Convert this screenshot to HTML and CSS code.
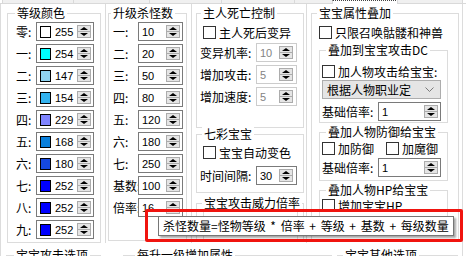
FILE: index.html
```html
<!DOCTYPE html>
<html lang="zh-CN">
<head>
    <meta charset="UTF-8">
    <title>宝宝设置</title>
    <link rel="stylesheet" href="styles.css">
</head>
<body>
    <div class="tabs">
        <span class="tab t1"></span>
        <span class="tab t2"></span>
        <span class="tab t3"></span>
        <span class="tab t4"></span>
        <span class="tab t5"></span>
        <span class="tab active t6"></span>
        <span class="tab t7"></span>
    </div>

    <div class="page">
        <div class="top">
            <!-- 等级颜色 -->
            <div class="pane p1">
                <div class="group g-colors">
                    <span class="title">等级颜色</span>
                    <div class="rows">
                        <div class="row"><span class="label">零:</span><div class="spin"><span class="swatch c0"></span><span class="val">255</span><span class="arrows"><i class="up"></i><i class="down"></i></span></div></div>
                        <div class="row"><span class="label">一:</span><div class="spin"><span class="swatch c1"></span><span class="val">254</span><span class="arrows"><i class="up"></i><i class="down"></i></span></div></div>
                        <div class="row"><span class="label">二:</span><div class="spin"><span class="swatch c2"></span><span class="val">147</span><span class="arrows"><i class="up"></i><i class="down"></i></span></div></div>
                        <div class="row"><span class="label">三:</span><div class="spin"><span class="swatch c3"></span><span class="val">154</span><span class="arrows"><i class="up"></i><i class="down"></i></span></div></div>
                        <div class="row"><span class="label">四:</span><div class="spin"><span class="swatch c4"></span><span class="val">229</span><span class="arrows"><i class="up"></i><i class="down"></i></span></div></div>
                        <div class="row"><span class="label">五:</span><div class="spin"><span class="swatch c5"></span><span class="val">168</span><span class="arrows"><i class="up"></i><i class="down"></i></span></div></div>
                        <div class="row"><span class="label">六:</span><div class="spin"><span class="swatch c6"></span><span class="val">180</span><span class="arrows"><i class="up"></i><i class="down"></i></span></div></div>
                        <div class="row"><span class="label">七:</span><div class="spin"><span class="swatch c7"></span><span class="val">252</span><span class="arrows"><i class="up"></i><i class="down"></i></span></div></div>
                        <div class="row"><span class="label">八:</span><div class="spin"><span class="swatch c7"></span><span class="val">252</span><span class="arrows"><i class="up"></i><i class="down"></i></span></div></div>
                        <div class="row"><span class="label">九:</span><div class="spin"><span class="swatch c7"></span><span class="val">252</span><span class="arrows"><i class="up"></i><i class="down"></i></span></div></div>
                    </div>
                </div>
            </div>

            <!-- 升级杀怪数 -->
            <div class="pane p2">
                <div class="group g-kills">
                    <span class="title">升级杀怪数</span>
                    <div class="rows">
                        <div class="row"><span class="label">一:</span><div class="spin"><span class="val">10</span><span class="arrows"><i class="up"></i><i class="down"></i></span></div></div>
                        <div class="row"><span class="label">二:</span><div class="spin"><span class="val">20</span><span class="arrows"><i class="up"></i><i class="down"></i></span></div></div>
                        <div class="row"><span class="label">三:</span><div class="spin"><span class="val">50</span><span class="arrows"><i class="up"></i><i class="down"></i></span></div></div>
                        <div class="row"><span class="label">四:</span><div class="spin"><span class="val">80</span><span class="arrows"><i class="up"></i><i class="down"></i></span></div></div>
                        <div class="row"><span class="label">五:</span><div class="spin"><span class="val">120</span><span class="arrows"><i class="up"></i><i class="down"></i></span></div></div>
                        <div class="row"><span class="label">六:</span><div class="spin"><span class="val">180</span><span class="arrows"><i class="up"></i><i class="down"></i></span></div></div>
                        <div class="row"><span class="label">七:</span><div class="spin"><span class="val">250</span><span class="arrows"><i class="up"></i><i class="down"></i></span></div></div>
                        <div class="row"><span class="label">基数:</span><div class="spin"><span class="val">100</span><span class="arrows"><i class="up"></i><i class="down"></i></span></div></div>
                        <div class="row"><span class="label">倍率:</span><div class="spin"><span class="val">16</span><span class="arrows"><i class="up"></i><i class="down"></i></span></div></div>
                    </div>
                </div>
            </div>

            <div class="pane p3">
                <div class="group g-death">
                    <span class="title">主人死亡控制</span>
                    <label class="check-row"><span class="check"></span>主人死后变异</label>
                    <div class="row"><span class="label">变异机率:</span><div class="spin off"><span class="val">10</span><span class="arrows"><i class="up"></i><i class="down"></i></span></div></div>
                    <div class="row"><span class="label">增加攻击:</span><div class="spin off"><span class="val">5</span><span class="arrows"><i class="up"></i><i class="down"></i></span></div></div>
                    <div class="row"><span class="label">增加速度:</span><div class="spin off"><span class="val">5</span><span class="arrows"><i class="up"></i><i class="down"></i></span></div></div>
                </div>
                <div class="group g-rainbow">
                    <span class="title">七彩宝宝</span>
                    <label class="check-row"><span class="check"></span>宝宝自动变色</label>
                    <div class="row"><span class="label">时间间隔:</span><div class="spin"><span class="val">30</span><span class="arrows"><i class="up"></i><i class="down"></i></span></div></div>
                </div>
                <div class="group g-power">
                    <span class="title">宝宝攻击威力倍率</span>
                    <div class="inner-box"></div>
                </div>
            </div>

            <!-- 宝宝属性叠加 -->
            <div class="pane p4">
                <div class="group g-stack">
                    <span class="title">宝宝属性叠加</span>
                    <label class="check-row"><span class="check"></span>只限召唤骷髅和神兽</label>
                    <div class="group sub sub-dc">
                        <span class="title">叠加到宝宝攻击DC</span>
                        <label class="check-row"><span class="check"></span>加人物攻击给宝宝:</label>
                        <div class="select">根据人物职业定<svg width="9" height="5" viewBox="0 0 9 5"><path d="M0.5 0.5 L4.5 4.5 L8.5 0.5" fill="none" stroke="#7a7a7a"/></svg></div>
                        <div class="row"><span class="label">基础倍率:</span><div class="spin"><span class="val">1</span><span class="arrows"><i class="up"></i><i class="down"></i></span></div></div>
                    </div>
                    <div class="group sub sub-def">
                        <span class="title">叠加人物防御给宝宝</span>
                        <div class="checks">
                            <label class="check-row"><span class="check"></span>加防御</label>
                            <label class="check-row"><span class="check"></span>加魔御</label>
                        </div>
                        <div class="row"><span class="label">基础倍率:</span><div class="spin"><span class="val">1</span><span class="arrows"><i class="up"></i><i class="down"></i></span></div></div>
                    </div>
                    <div class="group sub sub-hp">
                        <span class="title">叠加人物HP给宝宝</span>
                        <label class="check-row"><span class="check"></span>增加宝宝HP</label>
                    </div>
                </div>
            </div>
        </div>

        <div class="bottom">
            <div class="group b-attack"><span class="title">宝宝攻击选项</span></div>
            <div class="group b-level"><span class="title">每升一级增加属性</span></div>
            <div class="group b-other"><span class="title">宝宝其他选项</span></div>
        </div>
    </div>

    <!-- hover hint over 倍率 -->
    <div class="tip">杀怪数量=怪物等级 * 倍率 + 等级 + 基数 + 每级数量</div>
    <div class="mark"></div>
</body>
</html>
```

FILE: styles.css
```css
body {
    margin: 0;
    width: 466px;
    height: 256px;
    overflow: hidden;
    position: relative;
    background: #fff;
    font-family: "Noto Sans CJK SC", sans-serif;
    font-size: 12px;
    color: #000;
}

/* tab strip, only its bottom edge shows */
.tabs {
    display: flex;
    height: 4px;
    padding-left: 2px;
    border-bottom: 1px solid #d9d9d9;
    box-sizing: border-box;
}

.tab {
    height: 3px;
    background: #f0f0f0;
    border: 1px solid #d9d9d9;
    border-top: none;
    margin-right: -1px;
}

.tab.active {
    background: #fff;
    height: 4px;
    border-bottom: none;
    border-top: 1px dotted #444;
    box-sizing: border-box;
}

.t1 { width: 70px; }
.t2 { width: 75px; }
.t3 { width: 71px; }
.t4 { width: 72px; }
.t5 { width: 37px; }
.t6 { width: 66px; }
.t7 { width: 64px; }

.page {
    width: 463px;
    height: 252px;
    box-sizing: border-box;
    border-left: 1px solid #dcdcdc;
    border-right: 1px solid #dcdcdc;
}

.top {
    display: flex;
    height: 239px;
}

/* each column sits in its own panel, left edge visible */
.pane {
    box-sizing: border-box;
    padding-top: 9px;
}

.p1 { width: 104px; padding-left: 6px; }
.p2 { width: 86px; padding-left: 2px; border-left: 1px solid #dcdcdc; }
.p3 { width: 115px; padding-left: 4px; border-left: 1px solid #dcdcdc; }
.p4 { width: 156px; padding-left: 4px; border-left: 1px solid #dcdcdc; }

.group {
    border: 1px solid #dcdcdc;
    box-sizing: border-box;
}

.group > .title {
    display: table;
    height: 14px;
    line-height: 14px;
    margin: -8px 0 0 7px;
    padding: 0 2px;
    background: #fff;
    white-space: nowrap;
}

.rows {
    padding-top: 2px;
}

.row {
    display: flex;
    align-items: center;
    height: 19px;
    margin-bottom: 3px;
}

.label {
    white-space: nowrap;
}

/* spin edit */
.spin {
    display: flex;
    align-items: center;
    height: 19px;
    box-sizing: border-box;
    border: 1px solid #7a7a7a;
    background: #fff;
    padding: 0 2px 0 3px;
}

.spin .val {
    flex: 1;
    font-family: "Liberation Sans", sans-serif;
    font-size: 11px;
    line-height: 12px;
}

.spin.off {
    border-color: #cccccc;
}

.spin.off .val {
    color: #838383;
}

.arrows {
    display: flex;
    flex-direction: column;
    width: 14px;
    height: 13px;
}

.arrows i {
    flex: 1;
    display: flex;
    align-items: center;
    justify-content: center;
    background: #e5e5e5;
    border: 1px solid #acacac;
}

.arrows i + i {
    border-top: none;
}

.arrows .up::before {
    content: "";
    border-left: 4px solid transparent;
    border-right: 4px solid transparent;
    border-bottom: 3px solid #000;
}

.arrows .down::before {
    content: "";
    border-left: 4px solid transparent;
    border-right: 4px solid transparent;
    border-top: 3px solid #000;
}

.swatch {
    width: 11px;
    height: 12px;
    box-sizing: border-box;
    border: 1px solid #000;
    margin-right: 4px;
}

.c0 { background: #ffffff; }
.c1 { background: #00ffff; }
.c2 { background: #8fd3f0; }
.c3 { background: #33b2ee; }
.c4 { background: #7f84ff; }
.c5 { background: #0a80dc; }
.c6 { background: #1549e0; }
.c7 { background: #0000ff; }

/* check boxes */
.check-row {
    display: flex;
    align-items: center;
    height: 13px;
    line-height: 13px;
    white-space: nowrap;
}

.check {
    width: 13px;
    height: 13px;
    box-sizing: border-box;
    border: 1px solid #333;
    background: #fff;
    margin-right: 3px;
}

/* 等级颜色 */
.g-colors {
    width: 94px;
    height: 230px;
}

.g-colors .rows {
    padding-left: 8px;
}

.g-colors .label {
    width: 20px;
}

.g-colors .spin {
    width: 58px;
}

/* 升级杀怪数 */
.g-kills {
    width: 79px;
    height: 228px;
}

.g-kills > .title {
    margin-left: 2px;
}

.g-kills .rows {
    padding-left: 4px;
}

.g-kills .label {
    width: 25px;
}

.g-kills .spin {
    width: 45px;
}

/* middle column */
.p3 .group {
    width: 108px;
}

.p3 .label {
    width: 56px;
    padding-left: 3px;
}

.p3 .spin {
    width: 41px;
    padding-right: 3px;
}

.g-death {
    height: 115px;
}

.g-death > .title {
    margin-left: 4px;
}

.g-death .check-row {
    margin: 6px 0 4px 6px;
}

.g-rainbow {
    height: 59px;
    margin-top: 6px;
}

.g-rainbow > .title {
    margin-left: 5px;
}

.g-rainbow .check-row {
    margin: 5px 0 7px 6px;
}

.g-power {
    height: 38px;
    margin-top: 10px;
}

.g-power > .title {
    margin-left: 5px;
}

.inner-box {
    height: 30px;
    margin: 0 5px 0 6px;
    border: 1px solid #dcdcdc;
    border-bottom: none;
}

/* 宝宝属性叠加 */
.g-stack {
    width: 148px;
    height: 228px;
    padding: 0 10px 0 7px;
}

.g-stack > .title {
    margin-left: -2px;
}

.g-stack > .check-row {
    margin: 6px 0 11px 0;
}

.sub {
    padding: 0 6px 0 2px;
}

.sub > .title {
    margin-left: 4px;
}

.sub-dc {
    height: 73px;
}

.sub-dc .check-row {
    margin: 8px 0 2px;
}

.select {
    display: flex;
    align-items: center;
    justify-content: space-between;
    height: 19px;
    box-sizing: border-box;
    background: #e5e5e5;
    border: 1px solid #adadad;
    padding: 0 6px 0 4px;
    margin-bottom: 3px;
}

.sub .label {
    width: 56px;
}

.sub .spin {
    flex: 1;
}

.sub-def {
    height: 49px;
    margin-top: 9px;
}

.checks {
    display: flex;
    gap: 12px;
    margin: 3px 0 3px;
}

.sub-hp {
    height: 44px;
    margin-top: 9px;
}

.sub-hp .check-row {
    margin-top: 2px;
}

/* bottom row of group boxes */
.bottom {
    display: flex;
    padding: 12px 0 0 5px;
}

.bottom .group {
    height: 20px;
    border-bottom: none;
}

.b-attack {
    width: 95px;
}

.b-attack > .title {
    margin-left: 7px;
}

.b-level {
    width: 209px;
    margin-left: 22px;
}

.b-level > .title {
    margin-left: 11px;
}

.b-other {
    width: 121px;
    margin-left: 5px;
}

.b-other > .title {
    margin-left: 5px;
}

/* tooltip and the red highlight drawn over it */
.tip {
    position: absolute;
    left: 158px;
    top: 216px;
    width: 296px;
    height: 20px;
    box-sizing: border-box;
    padding-left: 4px;
    line-height: 18px;
    word-spacing: 2px;
    background: #fff;
    border: 1px solid #767676;
    box-shadow: 2px 2px 2px rgba(0, 0, 0, 0.35);
    white-space: nowrap;
}

.mark {
    position: absolute;
    left: 145px;
    top: 209px;
    width: 318px;
    height: 33px;
    box-sizing: border-box;
    border: 3px solid #f0140f;
    border-radius: 2px;
}
```
